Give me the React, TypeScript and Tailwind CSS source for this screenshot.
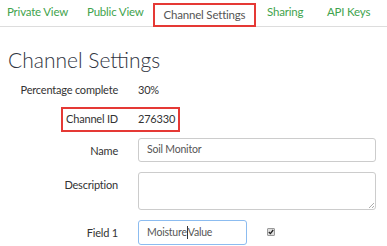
import React from "react";

const font = { fontFamily: "Lato, 'Open Sans', sans-serif" };

export default function App() {
  return (
    <div className="w-[387px] h-[246px] overflow-hidden bg-white text-[#333] whitespace-nowrap" style={font}>
      <div className="flex items-end h-[27px] border-b border-[#ddd] text-[11.5px] tracking-[-0.2px]">
        <div className="w-[87px] pl-[7px] pb-[6px] text-[#3fa34d]">Private View</div>
        <div className="w-[66px] pb-[6px] text-[#3fa34d]">Public View</div>
        <div className="w-[103px] h-[24px] mb-[-1px] border-2 border-[#e53935] bg-white flex items-center justify-center text-[#555]">Channel Settings</div>
        <div className="w-[71px] pl-[11px] pb-[6px] text-[#3fa34d]">Sharing</div>
        <div className="pb-[6px] text-[#3fa34d]">API Keys</div>
      </div>
      <h1 className="ml-[8px] mt-[19px] text-[21px] leading-[28px] font-light text-[#2f3340]">Channel Settings</h1>
      <div className="text-[11px] tracking-[-0.2px] mt-[8px]">
        <div className="flex items-center h-[16px]">
          <div className="w-[118px] text-right">Percentage complete</div>
          <div className="ml-[20px]">30%</div>
        </div>
        <div className="ml-[61px] mt-[9px] w-[119px] h-[25px] border-2 border-[#e53935] flex items-center">
          <div className="w-[55px] text-right">Channel ID</div>
          <div className="ml-[20px]">276330</div>
        </div>
        <div className="flex mt-[6px]">
          <div className="w-[118px] text-right pt-[5px]">Name</div>
          <div className="ml-[20px] w-[238px] h-[24px] border border-[#ccc] rounded-[3px] flex items-center px-[8px] text-[10.5px] text-[#555]">Soil Monitor</div>
        </div>
        <div className="flex mt-[10px]">
          <div className="w-[118px] text-right pt-[5px]">Description</div>
          <div className="ml-[20px] w-[238px] h-[38px] border border-[#ccc] rounded-[3px] relative">
            <svg className="absolute right-[1px] bottom-[1px]" width="6" height="6" viewBox="0 0 6 6">
              <path d="M1 6 L6 1 M4 6 L6 4" stroke="#999" strokeWidth="0.8" />
            </svg>
          </div>
        </div>
        <div className="flex mt-[10px] items-start">
          <div className="w-[118px] text-right pt-[5px]">Field 1</div>
          <div className="ml-[20px] w-[109px] h-[25px] border border-[#8cbcf0] rounded-[3px] flex items-center px-[8px] text-[10.5px] text-[#555]">
            Moisture<span className="inline-block w-px h-[13px] bg-[#333]" />Value
          </div>
          <div className="ml-[20px] mt-[8px] w-[8px] h-[8px] border border-[#999] rounded-[1px] bg-[#ddd] flex items-center justify-center">
            <svg width="6" height="6" viewBox="0 0 6 6"><path d="M0.8 3 L2.4 4.6 L5.2 1" stroke="#222" strokeWidth="1.3" fill="none" /></svg>
          </div>
        </div>
      </div>
    </div>
  );
}
